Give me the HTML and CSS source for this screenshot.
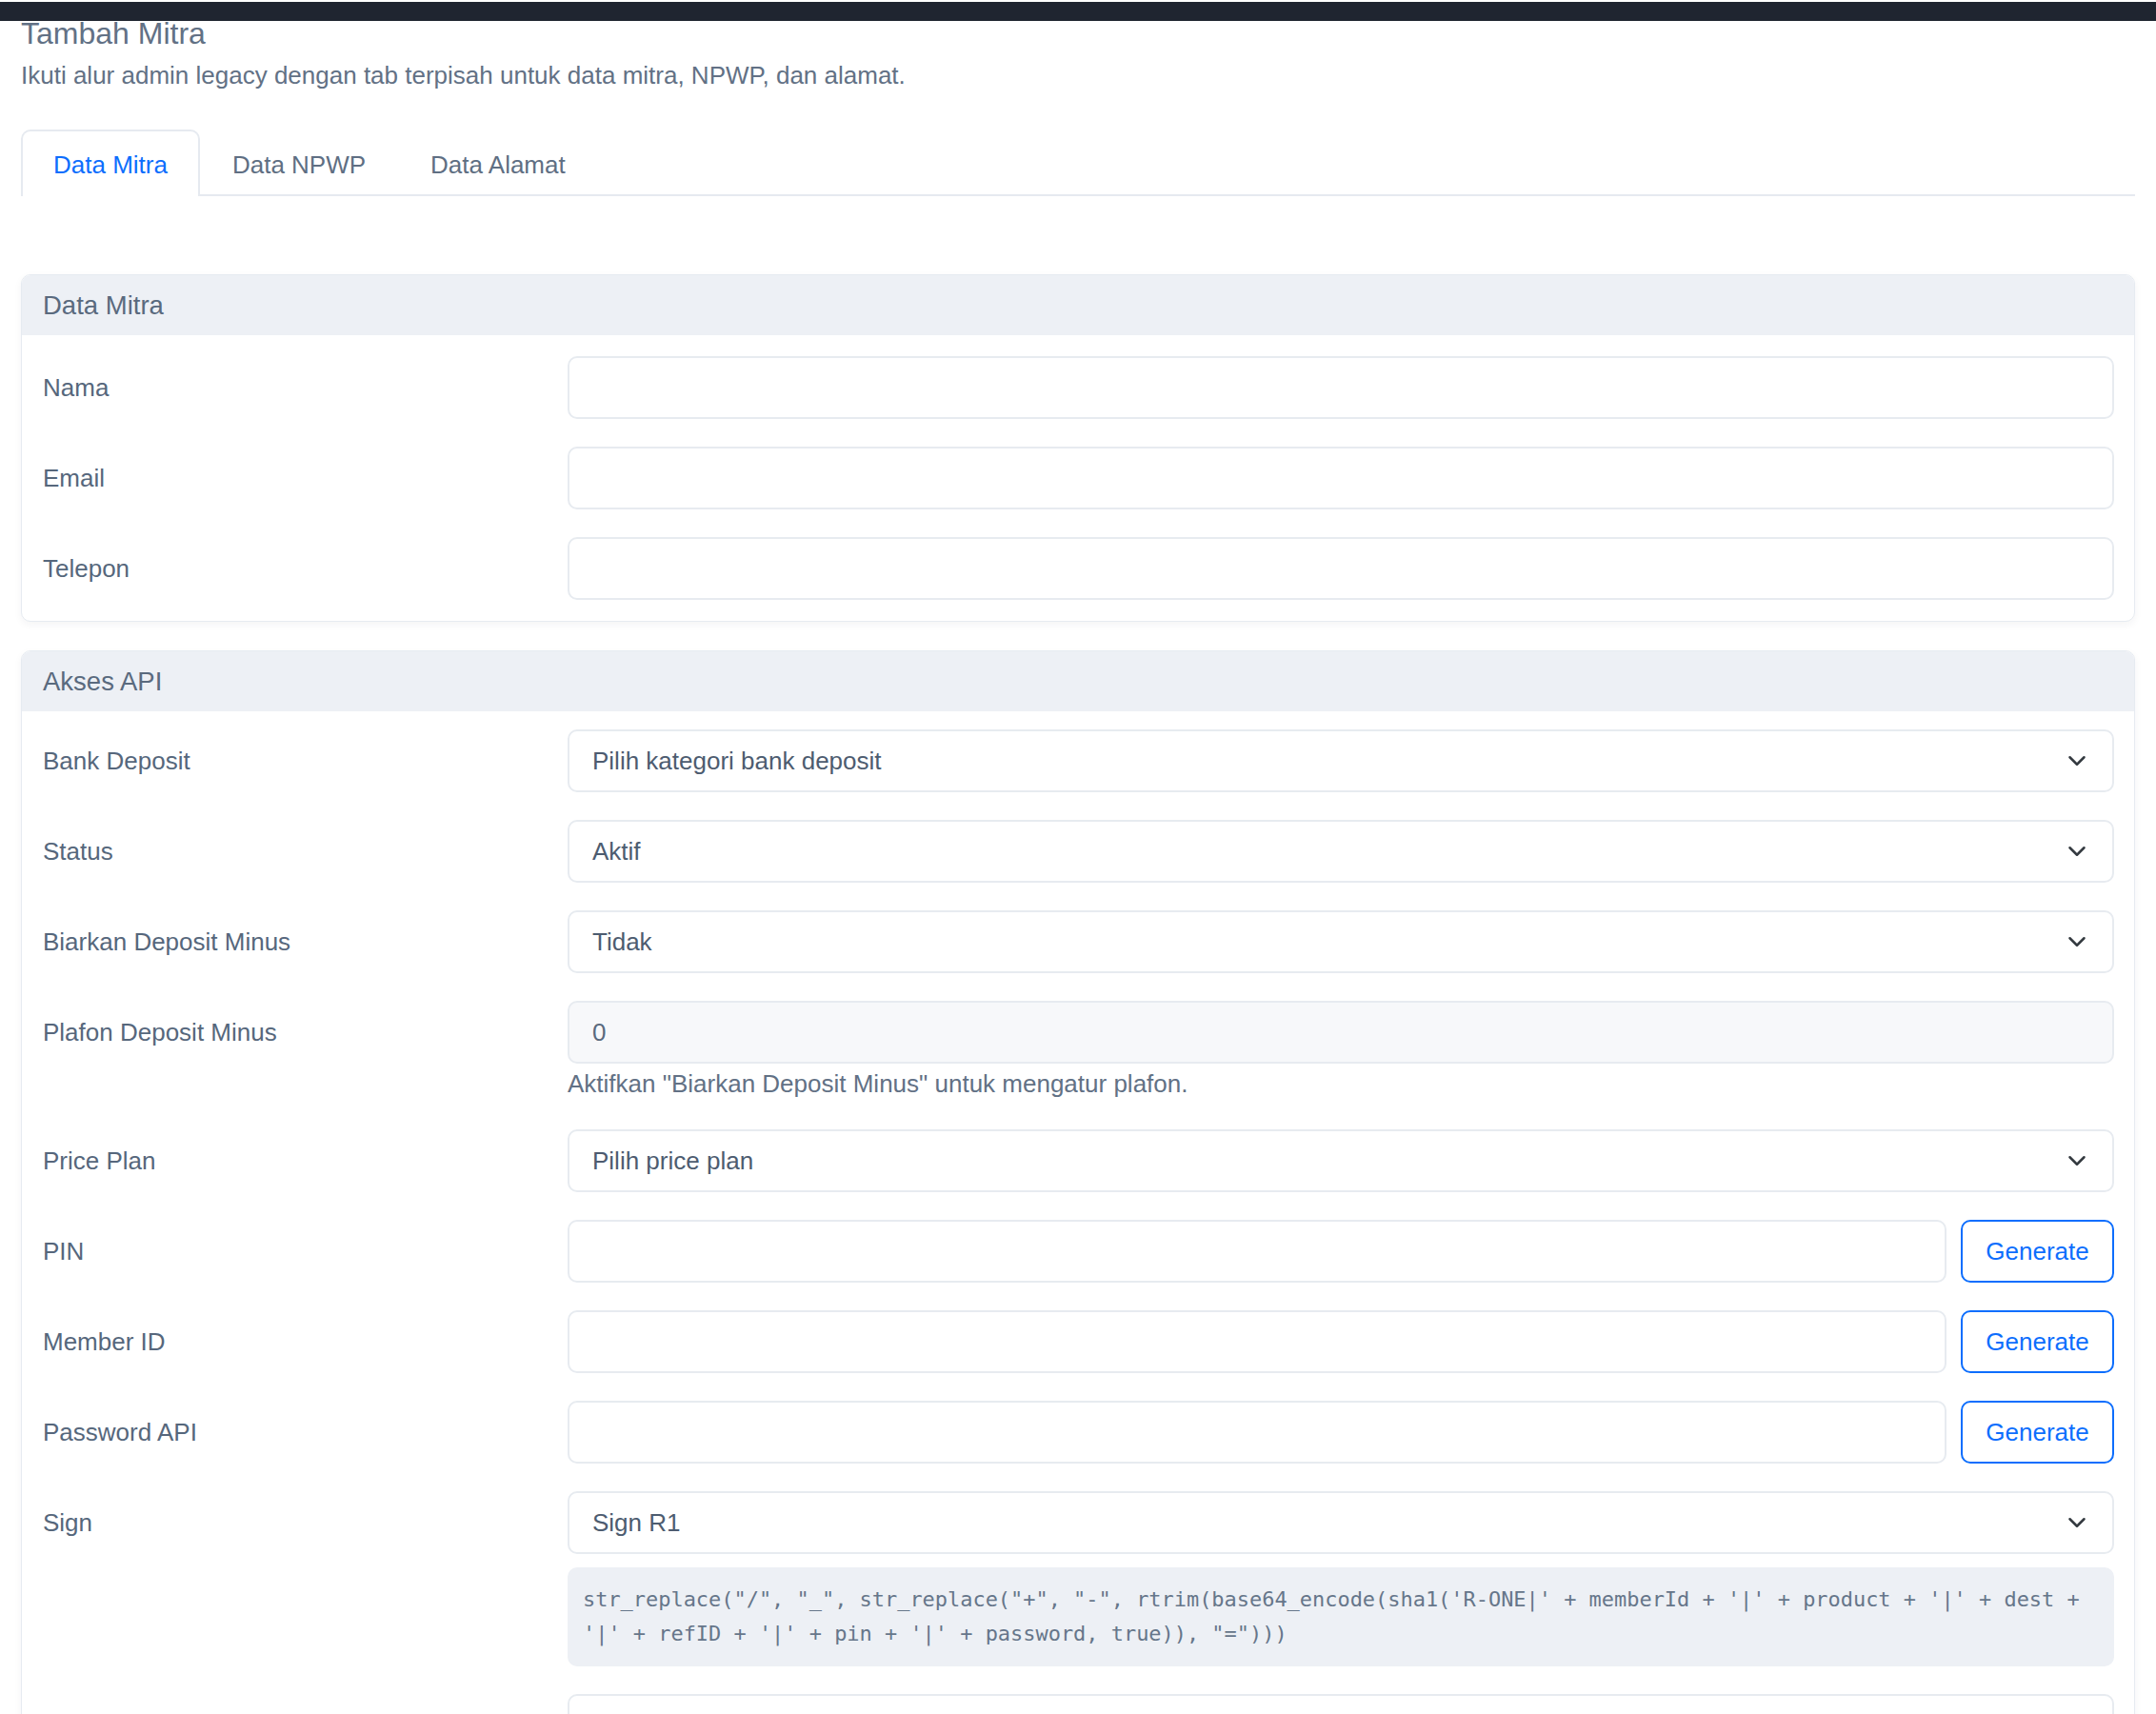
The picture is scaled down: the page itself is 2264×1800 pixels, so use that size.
FILE: index.html
```html
<!DOCTYPE html>
<html lang="id">
<head>
<meta charset="utf-8">
<title>Tambah Mitra</title>
<link rel="stylesheet" href="styles.css">
</head>
<body>
<div class="topbar"></div>
<main class="page">
  <h1 class="page-title">Tambah Mitra</h1>
  <p class="page-sub">Ikuti alur admin legacy dengan tab terpisah untuk data mitra, NPWP, dan alamat.</p>

  <nav class="tabs">
    <a class="tab active">Data Mitra</a>
    <a class="tab">Data NPWP</a>
    <a class="tab">Data Alamat</a>
  </nav>

  <section class="card">
    <div class="card-header">Data Mitra</div>
    <div class="card-body">
      <div class="row"><label class="lbl">Nama</label><div class="field"><input class="control" type="text"></div></div>
      <div class="row"><label class="lbl">Email</label><div class="field"><input class="control" type="email"></div></div>
      <div class="row"><label class="lbl">Telepon</label><div class="field"><input class="control" type="text"></div></div>
    </div>
  </section>

  <section class="card">
    <div class="card-header">Akses API</div>
    <div class="card-body tight">
      <div class="row"><label class="lbl">Bank Deposit</label>
        <div class="field"><div class="select">
          <select class="control"><option>Pilih kategori bank deposit</option></select>
          <svg class="chev" viewBox="0 0 16 16" width="20" height="20"><path d="M2 5l6 6 6-6" fill="none" stroke="#343a40" stroke-width="2" stroke-linecap="round" stroke-linejoin="round"/></svg>
        </div></div>
      </div>
      <div class="row"><label class="lbl">Status</label>
        <div class="field"><div class="select">
          <select class="control"><option>Aktif</option></select>
          <svg class="chev" viewBox="0 0 16 16" width="20" height="20"><path d="M2 5l6 6 6-6" fill="none" stroke="#343a40" stroke-width="2" stroke-linecap="round" stroke-linejoin="round"/></svg>
        </div></div>
      </div>
      <div class="row"><label class="lbl">Biarkan Deposit Minus</label>
        <div class="field"><div class="select">
          <select class="control"><option>Tidak</option></select>
          <svg class="chev" viewBox="0 0 16 16" width="20" height="20"><path d="M2 5l6 6 6-6" fill="none" stroke="#343a40" stroke-width="2" stroke-linecap="round" stroke-linejoin="round"/></svg>
        </div></div>
      </div>
      <div class="row"><label class="lbl">Plafon Deposit Minus</label>
        <div class="field">
          <input class="control disabled" type="text" value="0" disabled>
          <div class="help">Aktifkan "Biarkan Deposit Minus" untuk mengatur plafon.</div>
        </div>
      </div>
      <div class="row"><label class="lbl">Price Plan</label>
        <div class="field"><div class="select">
          <select class="control"><option>Pilih price plan</option></select>
          <svg class="chev" viewBox="0 0 16 16" width="20" height="20"><path d="M2 5l6 6 6-6" fill="none" stroke="#343a40" stroke-width="2" stroke-linecap="round" stroke-linejoin="round"/></svg>
        </div></div>
      </div>
      <div class="row"><label class="lbl">PIN</label>
        <div class="field group"><input class="control" type="text"><button class="btn-gen" type="button">Generate</button></div>
      </div>
      <div class="row"><label class="lbl">Member ID</label>
        <div class="field group"><input class="control" type="text"><button class="btn-gen" type="button">Generate</button></div>
      </div>
      <div class="row"><label class="lbl">Password API</label>
        <div class="field group"><input class="control" type="text"><button class="btn-gen" type="button">Generate</button></div>
      </div>
      <div class="row"><label class="lbl">Sign</label>
        <div class="field">
          <div class="select">
            <select class="control"><option>Sign R1</option></select>
            <svg class="chev" viewBox="0 0 16 16" width="20" height="20"><path d="M2 5l6 6 6-6" fill="none" stroke="#343a40" stroke-width="2" stroke-linecap="round" stroke-linejoin="round"/></svg>
          </div>
          <pre class="code">str_replace("/", "_", str_replace("+", "-", rtrim(base64_encode(sha1('R-ONE|' + memberId + '|' + product + '|' + dest + '|' + refID + '|' + pin + '|' + password, true)), "=")))</pre>
        </div>
      </div>
      <div class="row"><label class="lbl"></label><div class="field"><input class="control" type="text"></div></div>
    </div>
  </section>
</main>
</body>
</html>
```

FILE: styles.css
```css
* { box-sizing: border-box; }

html, body {
  margin: 0;
  padding: 0;
  background: #ffffff;
}

body {
  font-family: "Liberation Sans", Arial, sans-serif;
  font-size: 26px;
  line-height: 1.5;
  color: #5a6a7e;
}

.topbar {
  position: fixed;
  top: 2px;
  left: 0;
  right: 0;
  height: 20px;
  background: #1f2530;
  z-index: 10;
}

.page {
  padding: 16px 22px 40px 22px;
}

.page-title {
  margin: 0;
  font-size: 32px;
  font-weight: 400;
  line-height: 1.2;
  color: #627185;
}

.page-sub {
  margin: 6px 0 0;
  font-size: 26px;
  line-height: 38px;
  color: #627185;
}

.tabs {
  display: flex;
  margin-top: 38px;
  border-bottom: 2px solid #e6eaf0;
  margin-bottom: 82px;
}

.tab {
  display: block;
  padding: 16px 32px 12px;
  border: 2px solid transparent;
  border-bottom: 0;
  border-radius: 10px 10px 0 0;
  color: #5f6f83;
  line-height: 38px;
  margin-bottom: -2px;
  background: transparent;
  cursor: pointer;
}

.tab.active {
  color: #0d6efd;
  border-color: #e6eaf0;
  background: #ffffff;
  padding-bottom: 14px;
}

.card {
  border: 1px solid #e6ebf1;
  border-radius: 10px;
  background: #ffffff;
  box-shadow: 0 3px 8px rgba(30, 41, 59, 0.05);
  margin-bottom: 30px;
  overflow: hidden;
}

.card-header {
  height: 63px;
  display: flex;
  align-items: center;
  padding: 0 22px;
  background: #edf0f5;
  font-size: 27.5px;
  color: #5a6a7e;
}

.card-body {
  padding: 22px 21px 22px 22px;
  display: flex;
  flex-direction: column;
  gap: 29px;
}

.card-body.tight {
  padding-top: 19px;
}

.row {
  display: grid;
  grid-template-columns: 531px 1fr;
  column-gap: 20px;
  align-items: start;
}

.lbl {
  min-height: 66px;
  display: flex;
  align-items: center;
  color: #56677c;
}

.field {
  min-width: 0;
}

.field.group {
  display: flex;
  gap: 15px;
}

.control {
  display: block;
  width: 100%;
  height: 66px;
  padding: 0 24px;
  border: 2px solid #e7ebf0;
  border-radius: 10px;
  background: #ffffff;
  font-family: "Liberation Sans", Arial, sans-serif;
  font-size: 26px;
  color: #4d5c70;
  outline: none;
  -webkit-appearance: none;
  appearance: none;
}

.control.disabled {
  background: #f7f8fa;
  color: #5a6a7e;
}

.select {
  position: relative;
}

.select .control {
  padding-right: 60px;
}

.chev {
  position: absolute;
  right: 29px;
  top: 23px;
  pointer-events: none;
}

.help {
  margin-top: 2px;
  line-height: 38px;
  color: #627185;
}

.btn-gen {
  flex: 0 0 161px;
  height: 66px;
  border: 2px solid #0d6efd;
  border-radius: 10px;
  background: #ffffff;
  color: #0d6efd;
  font-family: "Liberation Sans", Arial, sans-serif;
  font-size: 26px;
  padding: 0;
  cursor: pointer;
}

.code {
  margin: 14px 0 0;
  padding: 16px;
  background: #edf0f5;
  border-radius: 10px;
  font-family: "DejaVu Sans Mono", "Liberation Mono", monospace;
  font-size: 21.94px;
  line-height: 36px;
  color: #66768a;
  white-space: pre-wrap;
  word-break: normal;
  overflow-wrap: break-word;
}
```
